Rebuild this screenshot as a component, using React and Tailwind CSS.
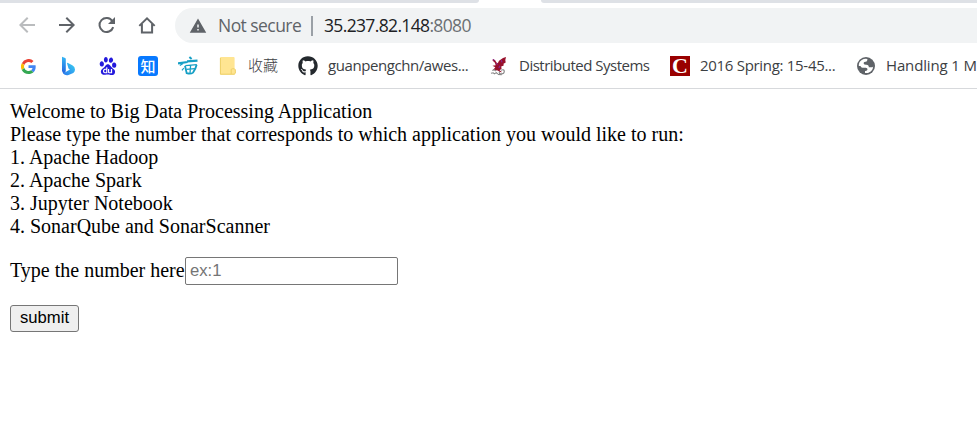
import { FaGithub } from "react-icons/fa";
import { SiBaidu } from "react-icons/si";
import { MdArrowBack, MdArrowForward, MdWarning } from "react-icons/md";

const UI = "font-['Open_Sans','Noto_Sans_CJK_SC',sans-serif]";

function ReloadIcon() {
  return (
    <svg viewBox="0 0 20 20" className="h-5 w-5" fill="none">
      <path d="M16.2 12.1A7 7 0 1 1 15.4 6.2" stroke="#5f6368" strokeWidth="2" />
      <path d="M18 2v7h-7z" fill="#5f6368" />
    </svg>
  );
}

function HomeIcon() {
  return (
    <svg viewBox="0 0 20 20" className="h-5 w-5" fill="none" stroke="#5f6368" strokeWidth="2">
      <path d="M2.300 10.900 10 3.400l7.700 7.500" />
      <path d="M4.900 9v8.400h10.200V9" />
    </svg>
  );
}

function GoogleIcon() {
  return (
    <svg viewBox="0 0 48 48" className="h-[15px] w-[15px]">
      <path fill="#ea4335" d="M24 9.5c3.5 0 6.7 1.2 9.2 3.6l6.9-6.9A24 24 0 0 0 2.6 13.2l8 6.2C12.4 13.7 17.7 9.5 24 9.5z" />
      <path fill="#4285f4" d="M47 24.5c0-1.6-.2-3.1-.4-4.5H24v9h12.9a11 11 0 0 1-4.8 7.2l7.7 6c4.5-4.2 7.2-10.4 7.2-17.7z" />
      <path fill="#fbbc05" d="M10.5 28.6a14.5 14.5 0 0 1 0-9.2l-8-6.2a24 24 0 0 0 0 21.6z" />
      <path fill="#34a853" d="M24 48c6.5 0 11.9-2.1 15.9-5.8l-7.7-6A14.5 14.5 0 0 1 10.5 28.6l-8 6.2A24 24 0 0 0 24 48z" />
    </svg>
  );
}

function BingIcon() {
  return (
    <svg viewBox="0 0 20 20" className="h-5 w-5">
      <defs>
        <linearGradient id="stem" x1="0" y1="0" x2="0" y2="1">
          <stop offset="0" stopColor="#35b8f5" />
          <stop offset="1" stopColor="#2360dd" />
        </linearGradient>
        <linearGradient id="bowl" x1="1" y1="0" x2="0" y2="1">
          <stop offset="0" stopColor="#3ad0f0" />
          <stop offset="1" stopColor="#2878ee" />
        </linearGradient>
      </defs>
      <path d="M4 .7 7.2 2Q7.8 2.3 7.8 3.1V15.3L6 17.8Q4 16.6 4 14.5z" fill="url(#stem)" />
      <path d="M9 7.2Q9.2 6.6 10 7l4.300 2.200Q17 10.600 17 13.400q0 2.200-1.700 3.500L10.500 19q-3.300 1-5.600-1.800l3.300-1.500 3.700-2.300-1.400-.9z" fill="url(#bowl)" />
    </svg>
  );
}

function FieldIcon() {
  return (
    <svg viewBox="0 0 20 20" className="h-5 w-5" fill="none" stroke="#159fc5">
      <path d="M11.400 1 13.600 3" strokeWidth="2" />
      <path d="M0 7.400 9.500 6 M9 5.300 19.500 4.600" strokeWidth="2.200" />
      <path d="M5 7.500 1.800 9.600" strokeWidth="1.200" />
      <path d="M7 9.800 8.700 17.200q4 1.200 6.300-.6Q17.700 13.200 18.600 8.800" strokeWidth="1.800" />
      <path d="M7.400 9.700 18.800 8.700M12.600 9.300 12 17.500M8.300 13.400l8.600-.8" strokeWidth="1.300" />
      <path d="M5.800 12 4 14.400" strokeWidth="1.200" />
    </svg>
  );
}

function FolderIcon() {
  return (
    <svg viewBox="0 0 20 20" className="h-5 w-5">
      <path d="M2 2Q2 1 3 1h12.600q1 0 1 1v10.300l.9 1.300v4.100l-1.200 1H3q-1 0-1-1z" fill="#ffe592" />
      <path d="M2.400 2v16.200h10.800V13.800q0-1 1-1h2.100l1 1v3.300l-1.100 1.100h-3" fill="none" stroke="#edcf68" strokeWidth="1" />
    </svg>
  );
}

function DragonIcon() {
  return (
    <svg viewBox="0 0 20 20" className="h-5 w-5">
      <path d="m4 3 2.200 1.200 1 2 1.600 1L10 4.700 14 2l3-1-.7 3 .4 2.500-2.200 1.300.2 1.700-2.500 1 .4 2.200-2 1.600 2.500 1.900-2.200-.3-2.200-1.500L4 14l2.300-2.700L3.500 9.800l3.200-.6L5.900 6.700 3.500 4.600z" fill="#98102b" />
      <path d="m12.200 4.200.8 2.200M7.400 7.200l1.100 1.500m1.300 3.200 1.200-2M4 3.400l1.400 1.200" stroke="#8b2a91" strokeWidth="1.200" />
      <path d="m3.300 14.500 2-.8 1.700 1.500M2 17.300l2.200-.5 1.200 1 2-1.200 1.400 1.500M12 14.200q3-1.100 3.300 1-.1 2.700-3 2.700-3-.1-1.700-2.200M9 18.400l3.800.4" stroke="#888" strokeWidth="1.100" fill="none" />
    </svg>
  );
}

function GlobeIcon() {
  return (
    <svg viewBox="0 0 20 20" className="h-5 w-5">
      <circle cx="10" cy="10" r="9" fill="#5f6368" />
      <path d="M11.400 2.900Q11.500 5.700 9.200 5.700 7.300 5.900 7.700 7.800 8.200 8.900 10.400 8.800q2.600.1 2.400 2.500h3.900q.5-1 .5-2.100.3 5.900-5.200 7.700-1.700.4-3 0v-1.800q2.500.2 2.500-1.800 0-1.400-1.800-1.500H6.500Q4.900 11.600 4.500 10H2.800Q2.500 6.300 5.700 4.100 8.300 2.200 11.400 2.900z" fill="#fff" />
    </svg>
  );
}

function Bookmark({ icon, label, width, textClass = "" }) {
  return (
    <div className={`flex shrink-0 items-center gap-2.5 ${width}`}>
      <span className="flex h-5 w-5 shrink-0 items-center justify-center">{icon}</span>
      {label && <span className={`pb-[2px] whitespace-nowrap ${textClass}`}>{label}</span>}
    </div>
  );
}

export default function App() {
  return (
    <div className="h-[437px] w-[977px] overflow-hidden bg-white text-black">
      <header className={UI}>
        <div className="flex h-[3px] justify-between bg-white">
          <div className="w-[479px] rounded-br-[6px] bg-[#dee1e6]" />
          <div className="w-[436px] rounded-bl-[6px] bg-[#dee1e6]" />
        </div>
        <div className="flex h-[45px] items-start pt-[5px] pl-[7px]">
          <nav className="grid h-[34px] w-[168px] shrink-0 grid-cols-[40px_40px_40px_40px] place-items-center">
            <MdArrowBack className="h-6 w-6 text-[#babcbe]" />
            <MdArrowForward className="h-6 w-6 text-[#5f6368]" />
            <ReloadIcon />
            <HomeIcon />
          </nav>
          <div className="flex h-[35px] flex-1 items-center rounded-l-full bg-[#f1f3f4] pl-[14px] text-[17.5px]">
            <MdWarning className="h-[18px] w-[18px] text-[#5f6368]" />
            <span className="ml-[11px] w-[84px] whitespace-nowrap tracking-[-0.55px] text-[#5f6368]">Not secure</span>
            <span className="ml-[9px] h-5 w-0.5 bg-[#9aa0a6]" />
            <span className="ml-[11px] whitespace-nowrap tracking-[-0.65px] text-[#202124]">
              35.237.82.148<span className="text-[#6b6f73]">:8080</span>
            </span>
          </div>
        </div>
        <div className="flex h-[41px] items-center border-b border-[#d7d9dc] pb-[4px] pl-[18px] text-[15px] text-[#3c4043]">
          <Bookmark width="w-10" icon={<GoogleIcon />} />
          <Bookmark width="w-10" icon={<BingIcon />} />
          <Bookmark width="w-10" icon={<SiBaidu className="h-[18px] w-[18px] text-[#2319dc]" />} />
          <Bookmark
            width="w-10"
            icon={<span className="flex h-5 w-5 items-center justify-center rounded-[3px] bg-[#0879ff] font-['Noto_Sans_CJK_SC',sans-serif] text-[15px] leading-5 font-medium text-white">知</span>}
          />
          <Bookmark width="w-10" icon={<FieldIcon />} />
          <Bookmark width="w-20" icon={<FolderIcon />} label="收藏" textClass="font-light" />
          <Bookmark width="w-[191px]" icon={<FaGithub className="h-5 w-5 text-[#24292e]" />} label="guanpengchn/awes..." textClass="tracking-[-0.42px]" />
          <Bookmark width="w-[181px]" icon={<DragonIcon />} label="Distributed Systems" textClass="tracking-[-0.5px]" />
          <Bookmark
            width="w-[186px]"
            icon={<span className="flex h-5 w-5 items-center justify-center bg-[#990000] font-['Liberation_Serif',serif] text-[22px] leading-5 font-bold text-white">C</span>}
            label="2016 Spring: 15-45..."
            textClass="tracking-[-0.3px]"
          />
          <Bookmark width="w-[121px]" icon={<GlobeIcon />} label="Handling 1 M" textClass="tracking-[-0.15px]" />
        </div>
      </header>
      <main className="px-[10px] pt-[11px] font-['Liberation_Serif',serif] text-[20px] leading-[23px]">
        <p>Welcome to Big Data Processing Application</p>
        <p>Please type the number that corresponds to which application you would like to run:</p>
        <p>1. Apache Hadoop</p>
        <p>2. Apache Spark</p>
        <p>3. Jupyter Notebook</p>
        <p>4. SonarQube and SonarScanner</p>
        <form className="pt-[19px]">
          <label className="flex items-center">
            <span className="w-[175px] pb-[2px] whitespace-nowrap">Type the number here</span>
            <input
              placeholder="ex:1"
              className="h-7 w-[213px] rounded-[2px] border border-[#767676] px-[4px] font-['Liberation_Sans',sans-serif] text-[16.67px] placeholder:text-[#757575]"
            />
          </label>
          <button
            type="button"
            className="mt-5 flex h-[27px] w-[69px] items-center justify-center rounded-[3px] border border-[#767676] bg-[#efefef] font-['Liberation_Sans',sans-serif] text-[16.67px] leading-none"
          >
            submit
          </button>
        </form>
      </main>
    </div>
  );
}
